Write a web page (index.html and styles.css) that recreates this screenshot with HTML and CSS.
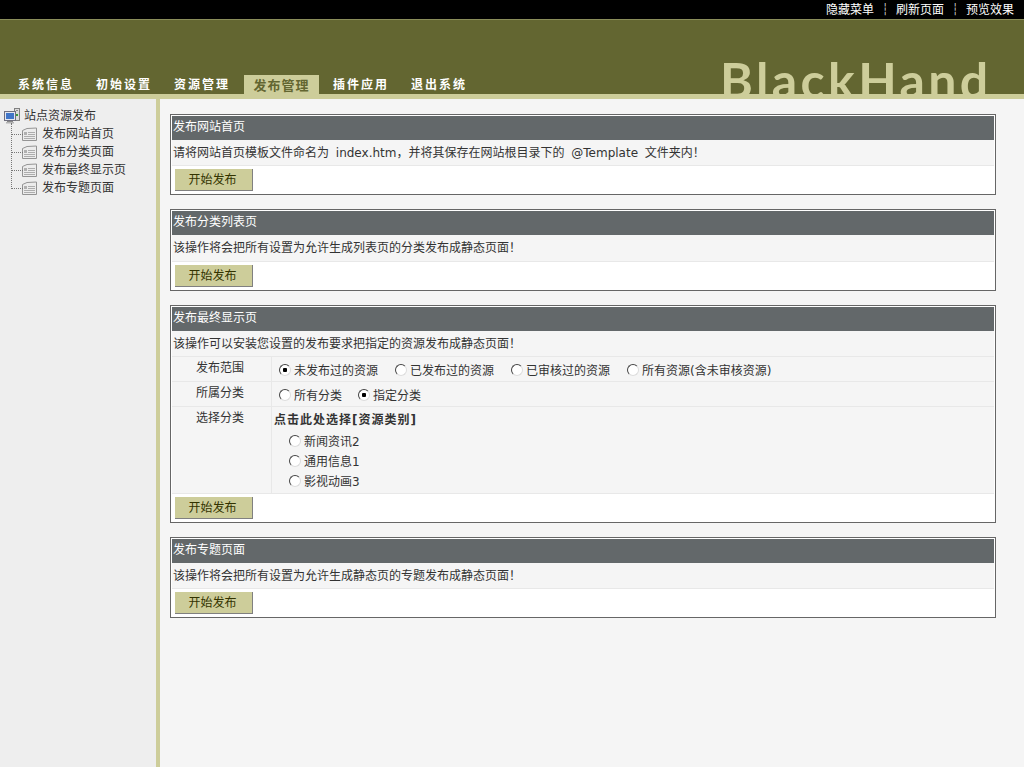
FILE: index.html
```html
<!DOCTYPE html>
<html lang="zh">
<head>
<meta charset="utf-8">
<title>发布管理</title>
<link rel="stylesheet" href="styles.css">
</head>
<body>
<svg class="defs" width="0" height="0">
  <symbol id="pc" viewBox="0 0 16 16">
    <rect x="10.5" y="0.5" width="5" height="12" fill="#dcdcdc" stroke="#808080"/>
    <rect x="12" y="6" width="2" height="2" fill="#3a9a3a"/>
    <rect x="12" y="2" width="2" height="1" fill="#8a8a8a"/>
    <rect x="0.5" y="3.5" width="11" height="9" fill="#e4e8f0" stroke="#70707e"/>
    <rect x="2" y="5" width="8" height="6" fill="#4176c8"/>
    <rect x="3" y="13" width="6" height="1" fill="#888"/>
    <rect x="2" y="14" width="8" height="1.5" fill="#b4b4b4"/>
  </symbol>
  <symbol id="doc" viewBox="0 0 15 14">
    <path d="M0.5 3.5 L5 1.5 L14.5 1 L14.5 13.5 L0.5 13.5 Z" fill="#ececec" stroke="#949494"/>
    <rect x="2" y="5" width="3" height="3" fill="#b0b0b0"/>
    <path d="M6 5.5H13M6 7.5H13M2 9.5H13M2 11.5H13" stroke="#adadad"/>
  </symbol>
</svg>
<header class="top">
  <div class="topbar">
    <a>隐藏菜单</a><span class="sep">┆</span><a>刷新页面</a><span class="sep">┆</span><a>预览效果</a>
  </div>
  <div class="banner">
    <nav class="nav">
      <a>系统信息</a>
      <a>初始设置</a>
      <a>资源管理</a>
      <a class="active">发布管理</a>
      <a>插件应用</a>
      <a>退出系统</a>
    </nav>
    <div class="logo">BlackHand</div>
  </div>
</header>
<div class="layout">
  <aside class="side">
    <div class="root"><svg class="pc"><use href="#pc"/></svg><span>站点资源发布</span></div>
    <ul class="tree">
      <li><svg class="doc"><use href="#doc"/></svg><span>发布网站首页</span></li>
      <li><svg class="doc"><use href="#doc"/></svg><span>发布分类页面</span></li>
      <li><svg class="doc"><use href="#doc"/></svg><span>发布最终显示页</span></li>
      <li><svg class="doc"><use href="#doc"/></svg><span>发布专题页面</span></li>
    </ul>
  </aside>
  <main class="main">
    <section class="panel">
      <h2>发布网站首页</h2>
      <p class="row">请将网站首页模板文件命名为 index.htm，并将其保存在网站根目录下的 @Template 文件夹内！</p>
      <div class="actions"><button class="btn">开始发布</button></div>
    </section>
    <section class="panel">
      <h2>发布分类列表页</h2>
      <p class="row tall">该操作将会把所有设置为允许生成列表页的分类发布成静态页面！</p>
      <div class="actions"><button class="btn">开始发布</button></div>
    </section>
    <section class="panel">
      <h2>发布最终显示页</h2>
      <p class="row">该操作可以安装您设置的发布要求把指定的资源发布成静态页面！</p>
      <div class="field">
        <div class="label">发布范围</div>
        <div class="value radios">
          <label class="w116"><input type="radio" name="a" checked>未发布过的资源</label>
          <label class="w116"><input type="radio" name="a">已发布过的资源</label>
          <label class="w116"><input type="radio" name="a">已审核过的资源</label>
          <label><input type="radio" name="a">所有资源(含未审核资源)</label>
        </div>
      </div>
      <div class="field">
        <div class="label">所属分类</div>
        <div class="value radios">
          <label class="w80"><input type="radio" name="b">所有分类</label>
          <label><input type="radio" name="b" checked>指定分类</label>
        </div>
      </div>
      <div class="field">
        <div class="label">选择分类</div>
        <div class="value cats">
          <div class="pick">点击此处选择[资源类别]</div>
          <label class="cat"><input type="radio" name="c">新闻资讯2</label>
          <label class="cat"><input type="radio" name="c">通用信息1</label>
          <label class="cat"><input type="radio" name="c">影视动画3</label>
        </div>
      </div>
      <div class="actions"><button class="btn">开始发布</button></div>
    </section>
    <section class="panel">
      <h2>发布专题页面</h2>
      <p class="row">该操作将会把所有设置为允许生成静态页的专题发布成静态页面！</p>
      <div class="actions"><button class="btn">开始发布</button></div>
    </section>
  </main>
</div>
</body>
</html>
```
FILE: styles.css
```css
* { box-sizing: border-box; }
html, body { height: 100%; }
body {
  margin: 0;
  height: 767px;
  overflow: hidden;
  display: flex;
  flex-direction: column;
  font: 12px/14px "DejaVu Sans", "Noto Sans CJK SC", sans-serif;
  color: #333;
  background: #f5f5f5;
}
.defs { position: absolute; }
.topbar {
  height: 20px;
  background: #000;
  border-bottom: 1px solid #8a8d5a;
  color: #fff;
  display: flex;
  justify-content: flex-end;
  align-items: center;
  padding-right: 10px;
}
.sep { width: 22px; text-align: center; font-size: 11px; color: #ccc; }
.banner {
  height: 79px;
  background: #636631;
  border-bottom: 5px solid #cdcd9a;
  display: flex;
  justify-content: space-between;
  align-items: flex-end;
}
.nav { display: flex; padding-left: 7px; }
.nav a {
  width: 78px;
  height: 19px;
  text-align: center;
  color: #fff;
  font-weight: 700;
  line-height: 21px;
  letter-spacing: 2px;
}
.nav a.active {
  width: 75px;
  margin: 0 3px;
  background: #cdcd9a;
  color: #636631;
  font-size: 13px;
  letter-spacing: 1px;
}
.logo {
  width: 304px;
  height: 33px;
  overflow: hidden;
  color: #cdcd9a;
  font: 700 50px/38px "Lato", sans-serif;
  letter-spacing: 3.4px;
}
.layout { flex: 1; display: flex; min-height: 0; }
.side {
  width: 160px;
  background: #eee;
  border-right: 4px solid #cdcd9a;
  padding: 8px 0 0 4px;
}
.root { display: flex; align-items: center; height: 18px; gap: 4px; }
.pc { width: 16px; height: 16px; }
.tree { list-style: none; margin: 0 0 0 7px; padding: 0; }
.tree li {
  position: relative;
  display: flex;
  align-items: center;
  height: 18px;
  padding-left: 11px;
  gap: 5px;
}
.tree li::before {
  content: "";
  position: absolute;
  left: 0;
  top: -2px;
  width: 11px;
  height: 11px;
  border-left: 1px dotted #777;
  border-bottom: 1px dotted #777;
}
.tree li + li::before { top: -9px; height: 18px; }
.doc { width: 15px; height: 14px; }
.main { flex: 1; padding: 15px 28px 0 10px; }
.panel {
  border: 1px solid #666;
  padding: 1px;
  background: #fff;
  margin-bottom: 14px;
}
h2 {
  margin: 0;
  height: 24px;
  background: #63686a;
  color: #fff;
  font-size: 12px;
  font-weight: 400;
  line-height: 23px;
  padding-left: 1px;
}
.row {
  margin: 0;
  height: 26px;
  line-height: 27px;
  background: #f5f5f5;
  border-bottom: 1px solid #e8e8e8;
  padding-left: 1px;
  white-space: nowrap;
  word-spacing: 3px;
}
.row.tall { height: 27px; }
.actions { height: 27px; padding: 3px 0 0 3px; }
.btn {
  display: block;
  width: 78px;
  height: 22px;
  padding: 0 2px 0 0;
  border: 0;
  border-right: 1px solid #808080;
  border-bottom: 1px solid #808080;
  background: #cdcd9a;
  color: #333300;
  font: inherit;
}
.field {
  display: flex;
  min-height: 25px;
  background: #f5f5f5;
  border-bottom: 1px solid #e8e8e8;
}
.label { width: 100px; padding: 4px 0 0 24px; border-right: 1px solid #e8e8e8; }
.value { flex: 1; padding-left: 2px; }
.radios { display: flex; align-items: center; padding: 4px 0 0 7px; }
.cats { padding-bottom: 1px; }
label { display: flex; align-items: center; }
.w116 { width: 116px; }
.w80 { width: 79px; }
input[type="radio"] {
  appearance: none;
  width: 12px;
  height: 12px;
  margin: -3px 3px 0 0;
  border-radius: 50%;
  border: 1px solid;
  border-color: #444 #ddd #ddd #444;
  background: #fff;
  flex: none;
}
input[type="radio"]:checked {
  background: radial-gradient(circle, #000 0 2px, #fff 2.5px);
}
.pick { font-weight: 700; margin: 6px 0 5px; letter-spacing: 1px; }
.cat { padding-left: 15px; height: 20px; }
```
